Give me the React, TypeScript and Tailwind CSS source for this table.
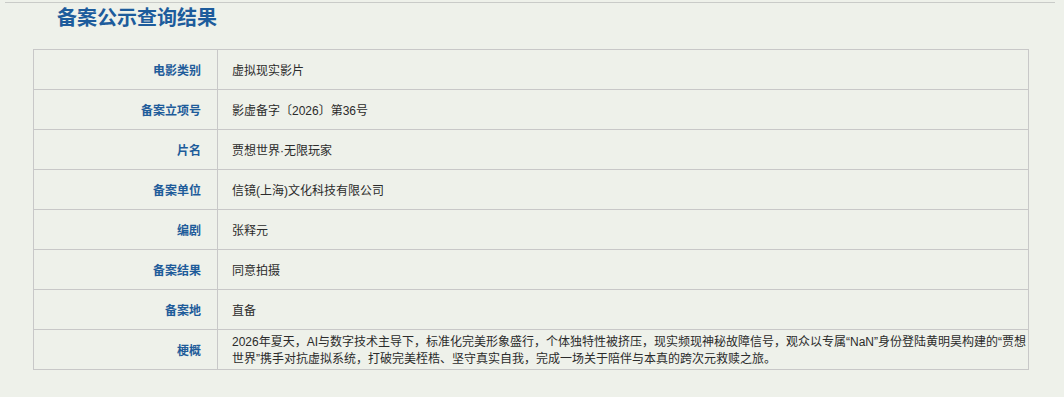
import React from "react";

const rows: { label: string; value: React.ReactNode }[] = [
  { label: "电影类别", value: "虚拟现实影片" },
  { label: "备案立项号", value: "影虚备字〔2026〕第36号" },
  { label: "片名", value: "贾想世界·无限玩家" },
  { label: "备案单位", value: "信镜(上海)文化科技有限公司" },
  { label: "编剧", value: "张释元" },
  { label: "备案结果", value: "同意拍摄" },
  { label: "备案地", value: "直备" },
  {
    label: "梗概",
    value: (
      <>
        2026年夏天，AI与数字技术主导下，标准化完美形象盛行，个体独特性被挤压，现实频现神秘故障信号，观众以专属“NaN”身份登陆黄明昊构建的“贾想
        <br />
        世界”携手对抗虚拟系统，打破完美桎梏、坚守真实自我，完成一场关于陪伴与本真的跨次元救赎之旅。
      </>
    ),
  },
];

export default function App() {
  return (
    <div
      className="w-[1064px] h-[397px] bg-[#eef1ea] overflow-hidden"
      style={{ fontFamily: '"Liberation Sans", "Noto Sans CJK SC", sans-serif' }}
    >
      <div className="pt-[2px] pl-[5px]">
        <div className="w-[1050px] border-t border-[#c9cbc8]" />
      </div>
      <div className="pl-[57px] pt-[1px] h-[46px]">
        <h1 className="text-[20px] leading-[28px] font-bold text-[#1d5c9c]">
          备案公示查询结果
        </h1>
      </div>
      <div className="ml-[33px] w-[996px] border-l border-t border-[#c8c8c8] grid grid-cols-[184px_811px]">
        {rows.map((r) => (
          <React.Fragment key={r.label}>
            <div className="h-[40px] border-r border-b border-[#c8c8c8] flex items-center justify-end pt-[2px] pr-[16px] text-[12px] font-bold text-[#1e5c9a]">
              {r.label}
            </div>
            <div className="h-[40px] border-r border-b border-[#c8c8c8] flex items-center pt-[3px] pl-[14px] text-[12px] leading-[17px] text-[#2b2b2b] whitespace-nowrap">
              <div>{r.value}</div>
            </div>
          </React.Fragment>
        ))}
      </div>
    </div>
  );
}
